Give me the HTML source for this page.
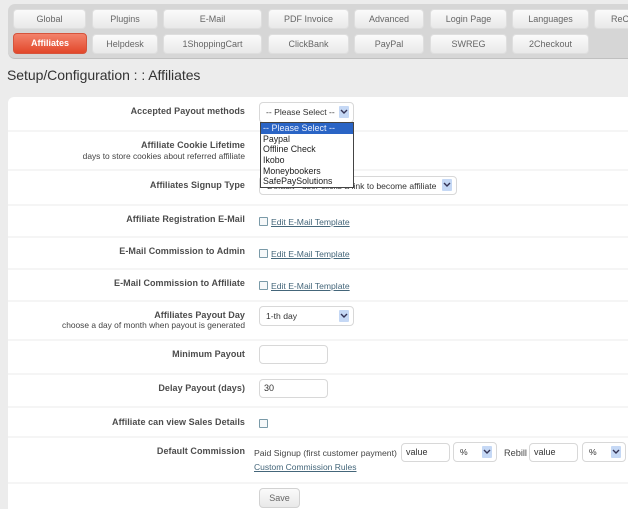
<!DOCTYPE html>
<html style="overflow:hidden;height:509px"><head><meta charset="utf-8"><style>
html,body{margin:0;padding:0}
body{width:628px;height:509px;overflow:hidden;position:relative;background:#ececec;font-family:"Liberation Sans",sans-serif;font-size:9px;color:#444}
#w{left:0;top:0;width:628px;height:509px;overflow:hidden;filter:blur(.3px)}
div,a,span{position:absolute;box-sizing:border-box;white-space:nowrap}
#bar{left:8px;top:4px;width:620px;height:55px;background:#d6d6d6;border-radius:7px 0 0 7px;border-bottom:1px solid #c0c0c0}
.b{height:20px;line-height:19px;text-align:center;border:1px solid #dedede;border-radius:4px;background:linear-gradient(#fafafa,#e8e8e8);color:#666;font-size:9px}
.b.on{background:linear-gradient(#f2836c,#e2472a);border-color:#d5543c;color:#fff;font-weight:bold;font-size:9px}
h1{position:absolute;margin:0;left:7px;top:67px;font:normal 14px "Liberation Sans",sans-serif;color:#333;letter-spacing:-.05px;white-space:nowrap;line-height:16px}
#panel{left:8px;top:97px;width:620px;height:412px;background:#fff;border-radius:6px 0 0 0}
.sep{left:8px;width:620px;height:2px;background:#f5f5f5}
.l{right:383px;font-weight:bold;font-size:9px;letter-spacing:.06px;color:#4c4c4c;text-align:right;line-height:12px}
.s{right:383px;font-size:8.4px;color:#444;line-height:11px}
.sel{height:20px;border:1px solid #d8d8d8;border-radius:4px;background:#fff;font-size:8.6px;line-height:18px;padding-left:6px;color:#333}
.sel i{position:absolute;right:4px;top:3px;width:10px;height:12px;background:#c5d8f5;border-radius:1px}
.sel i svg{position:absolute;left:1px;top:3px}
.in{height:19px;border:1px solid #d8d8d8;border-radius:4px;background:#fff;font-size:9px;line-height:17px;padding-left:4px;color:#333}
.cb{width:9px;height:9px;border:1px solid #7a9aa8;background:#f6f8f9;border-radius:1px}
.lk{color:#44667a;text-decoration:underline;font-size:8.6px;line-height:11px}
#dd{left:260px;top:122px;width:94px;height:66px;background:#fff;border:1px solid #444;font-size:8.8px;color:#222}
#dd span{left:2px;line-height:11px}
#dd .h{left:0;top:0;width:92px;height:11px;background:#2a64c5;color:#e8eefb;padding-left:2px;font-size:9px}
</style></head><body><div id="w">
<div id="bar"></div>
<div class="b" style="left:13px;top:9px;width:73px">Global</div>
<div class="b" style="left:92px;top:9px;width:66px">Plugins</div>
<div class="b" style="left:163px;top:9px;width:99px">E-Mail</div>
<div class="b" style="left:268px;top:9px;width:81px">PDF Invoice</div>
<div class="b" style="left:354px;top:9px;width:70px">Advanced</div>
<div class="b" style="left:430px;top:9px;width:77px">Login Page</div>
<div class="b" style="left:512px;top:9px;width:77px">Languages</div>
<div class="b" style="left:594px;top:9px;width:60px;text-align:left;padding-left:16px">ReCaptcha</div>
<div class="b on" style="left:13px;top:33px;width:74px;height:21px">Affiliates</div>
<div class="b" style="left:92px;top:34px;width:66px">Helpdesk</div>
<div class="b" style="left:163px;top:34px;width:99px">1ShoppingCart</div>
<div class="b" style="left:268px;top:34px;width:81px">ClickBank</div>
<div class="b" style="left:354px;top:34px;width:70px">PayPal</div>
<div class="b" style="left:430px;top:34px;width:77px">SWREG</div>
<div class="b" style="left:512px;top:34px;width:77px">2Checkout</div>
<h1>Setup/Configuration : : Affiliates</h1>
<div id="panel"></div>
<div class="sep" style="top:130px"></div>
<div class="sep" style="top:169px"></div>
<div class="sep" style="top:204px"></div>
<div class="sep" style="top:236px"></div>
<div class="sep" style="top:268px"></div>
<div class="sep" style="top:300px"></div>
<div class="sep" style="top:339px"></div>
<div class="sep" style="top:373px"></div>
<div class="sep" style="top:406px"></div>
<div class="sep" style="top:436px"></div>
<div class="sep" style="top:482px"></div>

<div class="l" style="top:105px">Accepted Payout methods</div>
<div class="sel" style="left:259px;top:102px;width:95px;height:21px">-- Please Select --<i><svg width="8" height="6" viewBox="0 0 8 6"><path d="M1 1l3 3 3-3" fill="none" stroke="#335" stroke-width="1.4"/></svg></i></div>

<div class="l" style="top:139px">Affiliate Cookie Lifetime</div>
<div class="s" style="top:151px">days to store cookies about referred affiliate</div>

<div class="l" style="top:179px">Affiliates Signup Type</div>
<div class="sel" style="left:259px;top:176px;width:198px;height:19px;padding-left:7px">Default - user clicks a link to become affiliate<i style="top:2px"><svg width="8" height="6" viewBox="0 0 8 6"><path d="M1 1l3 3 3-3" fill="none" stroke="#335" stroke-width="1.4"/></svg></i></div>

<div id="dd">
<span class="h">-- Please Select --</span>
<span style="top:11px">Paypal</span>
<span style="top:21px">Offline Check</span>
<span style="top:32px">Ikobo</span>
<span style="top:43px">Moneybookers</span>
<span style="top:53px">SafePaySolutions</span>
</div>

<div class="l" style="top:213px">Affiliate Registration E-Mail</div>
<div class="cb" style="left:259px;top:217px"></div>
<a class="lk" style="left:271px;top:217px">Edit E-Mail Template</a>

<div class="l" style="top:245px">E-Mail Commission to Admin</div>
<div class="cb" style="left:259px;top:249px"></div>
<a class="lk" style="left:271px;top:249px">Edit E-Mail Template</a>

<div class="l" style="top:277px">E-Mail Commission to Affiliate</div>
<div class="cb" style="left:259px;top:281px"></div>
<a class="lk" style="left:271px;top:281px">Edit E-Mail Template</a>

<div class="l" style="top:309px">Affiliates Payout Day</div>
<div class="s" style="top:320px">choose a day of month when payout is generated</div>
<div class="sel" style="left:259px;top:306px;width:95px">1-th day<i><svg width="8" height="6" viewBox="0 0 8 6"><path d="M1 1l3 3 3-3" fill="none" stroke="#335" stroke-width="1.4"/></svg></i></div>

<div class="l" style="top:348px">Minimum Payout</div>
<div class="in" style="left:259px;top:345px;width:69px"></div>

<div class="l" style="top:382px">Delay Payout (days)</div>
<div class="in" style="left:259px;top:379px;width:69px">30</div>

<div class="l" style="top:416px">Affiliate can view Sales Details</div>
<div class="cb" style="left:259px;top:419px"></div>

<div class="l" style="top:445px">Default Commission</div>
<span style="left:254px;top:447px;font-size:8.7px;line-height:12px">Paid Signup (first customer payment)</span>
<div class="in" style="left:401px;top:443px;width:49px;height:19px">value</div>
<div class="sel" style="left:453px;top:442px;width:44px">%<i><svg width="8" height="6" viewBox="0 0 8 6"><path d="M1 1l3 3 3-3" fill="none" stroke="#335" stroke-width="1.4"/></svg></i></div>
<span style="left:504px;top:447px;font-size:9.2px;line-height:12px">Rebill</span>
<div class="in" style="left:529px;top:443px;width:49px;height:19px">value</div>
<div class="sel" style="left:582px;top:442px;width:44px">%<i><svg width="8" height="6" viewBox="0 0 8 6"><path d="M1 1l3 3 3-3" fill="none" stroke="#335" stroke-width="1.4"/></svg></i></div>
<a class="lk" style="left:254px;top:462px;font-size:8.5px">Custom Commission Rules</a>

<div class="b" style="left:259px;top:488px;width:41px;height:20px;line-height:18px;border-color:#d2d2d2">Save</div>
</div></body></html>
